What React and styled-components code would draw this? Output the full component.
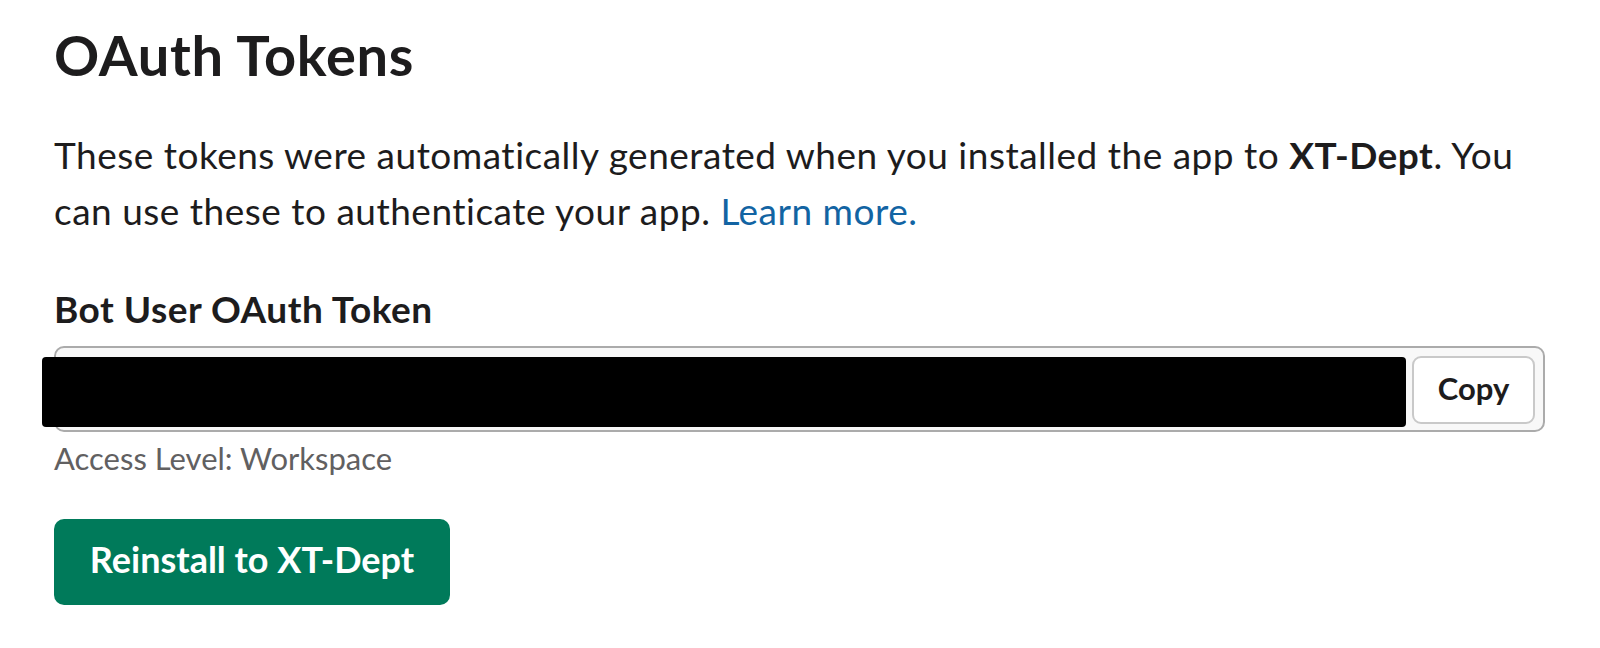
import React from "react";
import styled, { createGlobalStyle } from "styled-components";

const Global = createGlobalStyle`
  html, body { margin: 0; padding: 0; background: #ffffff; }
  body { font-family: Lato, "Noto Sans", sans-serif; color: #1d1c1d; }
`;

const Page = styled.main`
  box-sizing: border-box;
  width: 1600px;
  height: 648px;
  padding: 22px 55px 0 54px;
  display: flex;
  flex-direction: column;
`;

const Title = styled.h2`
  margin: 0;
  font-size: 56px;
  line-height: 66px;
  letter-spacing: 0.7px;
  font-weight: 700;
  color: #1d1c1d;
`;

const Intro = styled.p`
  margin: 39px 0 0;
  font-size: 37px;
  line-height: 56px;
  letter-spacing: 0.5px;
  font-weight: 400;
  color: #1d1c1d;
`;

const Strong = styled.b`
  font-weight: 700;
`;

const Link = styled.a`
  color: #1264a3;
  text-decoration: none;
`;

const Label = styled.h3`
  margin: 43px 0 0;
  font-size: 37px;
  line-height: 53px;
  letter-spacing: 0.5px;
  font-weight: 700;
  color: #1d1c1d;
`;

const Field = styled.div`
  position: relative;
  box-sizing: border-box;
  margin-top: 11px;
  height: 86px;
  border: 2px solid #ababab;
  border-radius: 10px;
  background: #f8f8f8;
  display: flex;
  align-items: center;
  padding: 0 8px 0 0;
`;

const TokenText = styled.div`
  flex: 1;
  height: 100%;
`;

const Redaction = styled.div`
  position: absolute;
  left: -14px;
  top: 9px;
  width: 1364px;
  height: 70px;
  background: #000000;
  border-radius: 4px;
`;

const CopyButton = styled.button`
  box-sizing: border-box;
  height: 68px;
  width: 123px;
  margin-top: 1px;
  border: 2px solid #c9c9c9;
  border-radius: 9px;
  background: #ffffff;
  font-family: Lato, "Noto Sans", sans-serif;
  font-size: 31px;
  font-weight: 700;
  color: #1d1c1d;
  padding: 0 0 3px;
  cursor: pointer;
`;

const Hint = styled.div`
  margin-top: 3px;
  font-size: 31px;
  line-height: 46px;
  color: #616061;
`;

const PrimaryButton = styled.button`
  align-self: flex-start;
  box-sizing: border-box;
  margin-top: 38px;
  height: 86px;
  width: 396px;
  border: none;
  border-radius: 10px;
  background: #007a5a;
  color: #ffffff;
  font-family: Lato, "Noto Sans", sans-serif;
  font-size: 36px;
  font-weight: 700;
  padding: 0 0 6px;
  cursor: pointer;
`;

export default function App() {
  return (
    <>
      <Global />
      <Page>
        <Title>OAuth Tokens</Title>
        <Intro>
          These tokens were automatically generated when you installed the app
          to <Strong>XT-Dept</Strong>. You can use these to authenticate your
          app. <Link href="#">Learn more.</Link>
        </Intro>
        <Label>Bot User OAuth Token</Label>
        <Field>
          <TokenText />
          <Redaction />
          <CopyButton>Copy</CopyButton>
        </Field>
        <Hint>Access Level: Workspace</Hint>
        <PrimaryButton>Reinstall to XT-Dept</PrimaryButton>
      </Page>
    </>
  );
}
